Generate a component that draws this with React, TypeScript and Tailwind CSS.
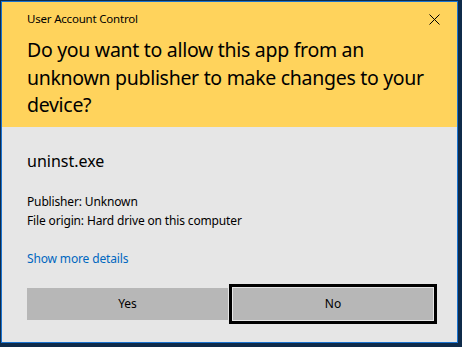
export default function App() {
  const font = { fontFamily: '"Noto Sans", "Open Sans", sans-serif' };
  return (
    <div className="w-[462px] h-[347px] bg-[#0f2b4a] pl-px pt-px" style={font}>
      <div className="w-[457px] h-[342px] border border-[#1a73d0] bg-[#e6e6e6] flex flex-col">
        {/* Yellow header */}
        <div className="h-[125px] bg-[#ffd35c] pl-[25px] pr-[13px] pt-[8px] text-black">
          <div className="flex items-center justify-between h-[18px]">
            <span className="text-[11.5px] leading-[18px] tracking-[-0.2px]">User Account Control</span>
            <svg width="11" height="11" viewBox="0 0 11 11" className="mr-[4px]">
              <path d="M0.5 0.5 L10.5 10.5 M10.5 0.5 L0.5 10.5" stroke="#000" strokeWidth="1" />
            </svg>
          </div>
          <p className="mt-[8px] text-[19.5px] leading-[27.5px] tracking-[-0.3px]">
            Do you want to allow this app from an
            <br />
            unknown publisher to make changes to your
            <br />
            device?
          </p>
        </div>

        {/* Body */}
        <div className="pl-[25px] pr-[24px] text-black">
          <div className="mt-[23px] text-[16px] leading-[22px]">uninst.exe</div>
          <div className="mt-[20px] text-[12px] leading-[19px] tracking-[-0.15px]">
            <div>Publisher: Unknown</div>
            <div>File origin: Hard drive on this computer</div>
          </div>
          <div className="mt-[20px] text-[12px] leading-[18px] tracking-[-0.15px] text-[#0067c0]">
            Show more details
          </div>
          <div className="mt-[20px] flex gap-[5px]">
            <button className="w-[201px] h-[32px] bg-[#b7b7b7] text-[12px] text-black">Yes</button>
            <button className="w-[200px] h-[32px] bg-[#b7b7b7] text-[12px] text-black outline-[3px] outline-solid outline-black outline-offset-1">
              No
            </button>
          </div>
        </div>
      </div>
    </div>
  );
}
